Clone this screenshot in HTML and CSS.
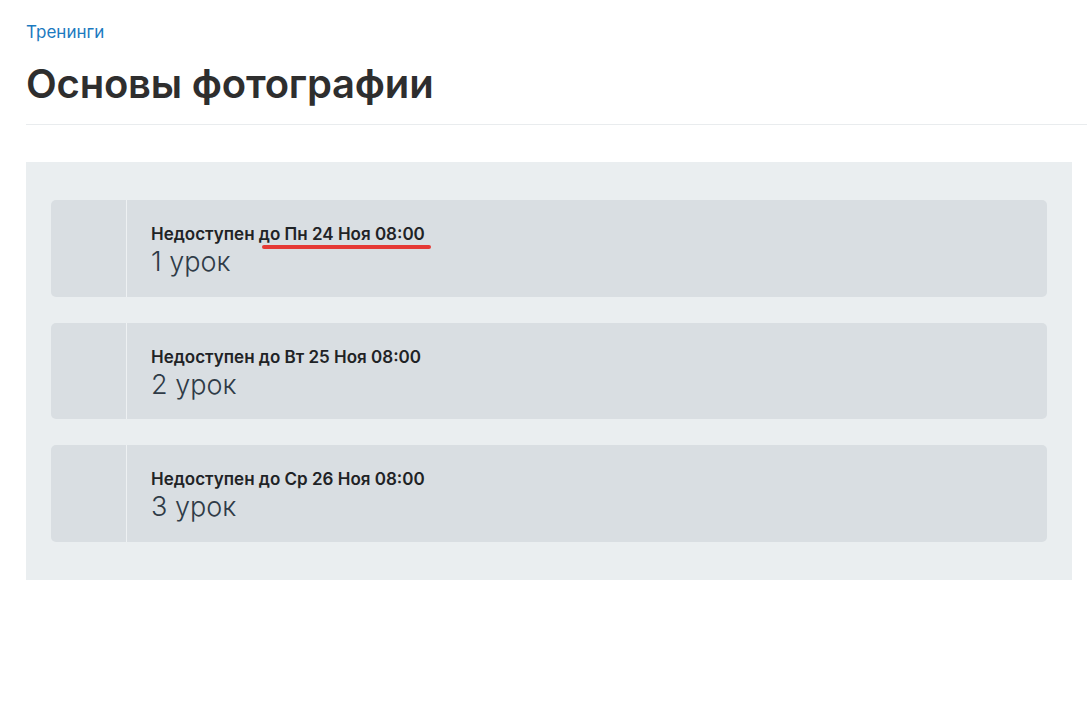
FILE: index.html
```html
<!DOCTYPE html>
<html lang="ru">
<head>
<meta charset="utf-8">
<title>Основы фотографии</title>
<link rel="stylesheet" href="styles.css">
</head>
<body>
<div class="page">
  <nav class="crumbs"><a href="#">Тренинги</a></nav>
  <h1 class="title">Основы фотографии</h1>
  <div class="divider"></div>
  <section class="panel">
    <div class="card">
      <div class="card-side"></div>
      <div class="card-body">
        <div class="status">Недоступен <span class="mark">до Пн 24 Ноя 08:00</span></div>
        <div class="lesson">1 урок</div>
      </div>
    </div>
    <div class="card">
      <div class="card-side"></div>
      <div class="card-body">
        <div class="status">Недоступен до Вт 25 Ноя 08:00</div>
        <div class="lesson">2 урок</div>
      </div>
    </div>
    <div class="card">
      <div class="card-side"></div>
      <div class="card-body">
        <div class="status">Недоступен до Ср 26 Ноя 08:00</div>
        <div class="lesson">3 урок</div>
      </div>
    </div>
  </section>
</div>
</body>
</html>
```

FILE: styles.css
```css
* { box-sizing: border-box; }
html, body { margin: 0; padding: 0; background: #fff; }
body { font-family: Inter, "Noto Sans", sans-serif; color: #2b2b2b; }
.page { padding: 20px 0 0 26px; }
.crumbs { font-size: 17px; line-height: 24px; }
.crumbs a { color: #1b7ac0; text-decoration: none; }
.title { margin: 16px 0 0; font-size: 40px; line-height: 48px; font-weight: 600; color: #2e2e2e; letter-spacing: -0.2px; }
.divider { margin-top: 16px; height: 1px; background: #e9ecee; }
.panel { margin: 37px 15px 0 0; background: #eaeef0; padding: 38px 25px; display: flex; flex-direction: column; gap: 26px; }
.card { display: flex; height: 96.5px; background: #d9dee2; border-radius: 5px; overflow: hidden; }
.card-side { width: 76px; border-right: 1px solid #eef1f3; flex: none; }
.card-body { padding: 23px 0 0 24px; }
.status { font-size: 17px; line-height: 22px; font-weight: 600; color: #1f2326; }
.mark { position: relative; }
.mark::after { content: ""; position: absolute; left: 3px; right: -6px; bottom: -5px; height: 4px; border-radius: 2px; background: #e53935; }
.lesson { font-size: 27px; line-height: 32px; font-weight: 300; color: #2f3b47; margin-top: 1px; }
```
